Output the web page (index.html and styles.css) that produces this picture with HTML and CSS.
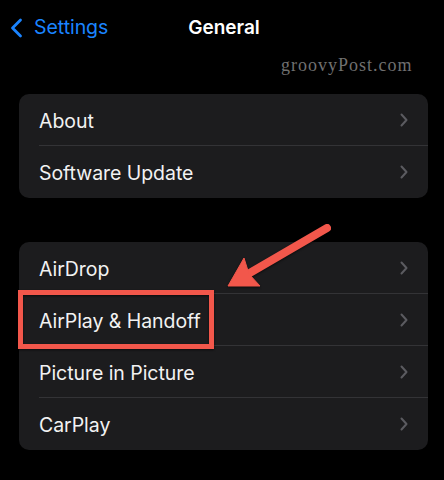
FILE: index.html
```html
<!DOCTYPE html>
<html>
<head>
<meta charset="utf-8">
<link rel="stylesheet" href="styles.css">
</head>
<body>
<div class="screen">
  <header class="nav">
    <div class="back">
      <svg class="back-icon" width="14" height="20" viewBox="0 0 14 20"><path d="M10.5 2 L2.5 10 L10.5 18" fill="none" stroke="#1a84ff" stroke-width="2.8" stroke-linecap="round" stroke-linejoin="round"/></svg>
      <span class="back-label">Settings</span>
    </div>
    <div class="title">General</div>
  </header>

  <div class="watermark">groovyPost.com</div>

  <section class="group group-first">
    <div class="row"><div class="row-inner"><span class="label">About</span><svg class="chev" width="8" height="14" viewBox="0 0 8 14"><path d="M1.5 1.5 L6.5 7 L1.5 12.5" fill="none" stroke="#5b5b60" stroke-width="2" stroke-linecap="round" stroke-linejoin="round"/></svg></div></div>
    <div class="row"><div class="row-inner last"><span class="label">Software Update</span><svg class="chev" width="8" height="14" viewBox="0 0 8 14"><path d="M1.5 1.5 L6.5 7 L1.5 12.5" fill="none" stroke="#5b5b60" stroke-width="2" stroke-linecap="round" stroke-linejoin="round"/></svg></div></div>
  </section>

  <section class="group group-second">
    <div class="row"><div class="row-inner"><span class="label">AirDrop</span><svg class="chev" width="8" height="14" viewBox="0 0 8 14"><path d="M1.5 1.5 L6.5 7 L1.5 12.5" fill="none" stroke="#5b5b60" stroke-width="2" stroke-linecap="round" stroke-linejoin="round"/></svg></div></div>
    <div class="row"><div class="row-inner"><span class="label">AirPlay &amp; Handoff</span><svg class="chev" width="8" height="14" viewBox="0 0 8 14"><path d="M1.5 1.5 L6.5 7 L1.5 12.5" fill="none" stroke="#5b5b60" stroke-width="2" stroke-linecap="round" stroke-linejoin="round"/></svg></div></div>
    <div class="row"><div class="row-inner"><span class="label">Picture in Picture</span><svg class="chev" width="8" height="14" viewBox="0 0 8 14"><path d="M1.5 1.5 L6.5 7 L1.5 12.5" fill="none" stroke="#5b5b60" stroke-width="2" stroke-linecap="round" stroke-linejoin="round"/></svg></div></div>
    <div class="row"><div class="row-inner last"><span class="label">CarPlay</span><svg class="chev" width="8" height="14" viewBox="0 0 8 14"><path d="M1.5 1.5 L6.5 7 L1.5 12.5" fill="none" stroke="#5b5b60" stroke-width="2" stroke-linecap="round" stroke-linejoin="round"/></svg></div></div>
  </section>

  <svg class="annotation" width="444" height="480" viewBox="0 0 444 480">
    <g class="anno-red">
      <rect x="20.5" y="292.5" width="191" height="54" fill="none" stroke="#f2574b" stroke-width="5"/>
      <line x1="248" y1="274" x2="327" y2="228" stroke="#f2574b" stroke-width="8" stroke-linecap="round"/>
      <polygon points="228,286 244,258 249,274 260,286" fill="#f2574b" stroke="#f2574b" stroke-width="1" stroke-linejoin="round"/>
    </g>
  </svg>
</div>
</body>
</html>
```

FILE: styles.css
```css
html, body {
  margin: 0;
  padding: 0;
  background: #000;
}

.screen {
  position: relative;
  width: 444px;
  height: 480px;
  overflow: hidden;
  background: #000;
  font-family: Inter, Roboto, "Liberation Sans", sans-serif;
  color: #fff;
}

.nav {
  position: relative;
  height: 54px;
  display: flex;
  align-items: center;
}

.back {
  display: flex;
  align-items: center;
  gap: 10px;
  padding-left: 10px;
  color: #1a84ff;
}

.back-icon {
  display: block;
  margin-top: 1px;
}

.back-label {
  font-size: 19.5px;
  letter-spacing: -0.05px;
}

.title {
  position: absolute;
  left: 0;
  right: 0;
  top: 0;
  height: 54px;
  display: flex;
  align-items: center;
  justify-content: center;
  font-size: 19px;
  font-weight: 600;
  padding-left: 4px;
}

.watermark {
  position: absolute;
  left: 281px;
  top: 55px;
  font-family: "Liberation Serif", serif;
  font-size: 18px;
  letter-spacing: 1px;
  color: #707070;
}

.group {
  margin: 0 16px 0 19px;
  background: #1c1c1e;
  border-radius: 10px;
  overflow: hidden;
}

.group-first {
  margin-top: 40px;
}

.group-second {
  margin-top: 44px;
}

.row {
  height: 52px;
  padding-left: 20px;
}

.row-inner {
  height: 100%;
  box-sizing: border-box;
  display: flex;
  align-items: center;
  justify-content: space-between;
  padding-right: 20px;
  border-bottom: 1px solid #333336;
}

.row-inner.last {
  border-bottom: none;
}

.label {
  font-size: 19.5px;
  color: #f2f2f2;
  letter-spacing: -0.05px;
  padding-top: 2px;
}

.chev {
  display: block;
}

.annotation {
  position: absolute;
  left: 0;
  top: 0;
  pointer-events: none;
}

.anno-red {
  filter: drop-shadow(0 1px 1px rgba(0, 0, 0, 0.6));
}
```
